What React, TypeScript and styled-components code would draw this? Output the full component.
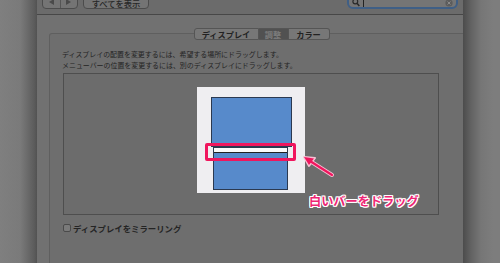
import React from "react";
import styled, { createGlobalStyle } from "styled-components";

const GlobalStyle = createGlobalStyle`
  html, body {
    margin: 0;
    padding: 0;
    background: #7b7b7b;
  }
  body {
    font-family: "Noto Sans CJK JP", "Noto Sans", sans-serif;
  }
`;

const Screen = styled.div`
  position: relative;
  width: 500px;
  height: 263px;
  display: flex;
  overflow: hidden;
  background: #7c7c7c;
`;

const LeftShadow = styled.div`
  width: 37px;
  flex-shrink: 0;
  background: linear-gradient(to right, #7f7f7f 0%, #7a7a7a 55%, #5c5c5c 92%, #525252 100%);
`;

const RightShadow = styled.div`
  flex: 1;
  background: linear-gradient(to right, #4c4c4c 0px, #626262 8px, #767676 18px, #7d7d7d 30px);
`;

const Window = styled.div`
  width: 426px;
  flex-shrink: 0;
  display: flex;
  flex-direction: column;
  background: #717171;
`;

const Toolbar = styled.div`
  flex-shrink: 0;
  display: flex;
  align-items: flex-end;
  padding: 0 5px 5px 5px;
  background: #6b6b6b;
  border-bottom: 1px solid #474747;
  box-sizing: content-box;
  height: 9px;
`;

const NavGroup = styled.div`
  display: flex;
  flex-shrink: 0;
  height: 18px;
  width: 34px;
  border: 1px solid #4c4c4c;
  border-radius: 4px;
  background: #747474;
  overflow: hidden;
`;

const NavHalf = styled.div<{ $divider?: boolean }>`
  flex: 1;
  display: flex;
  align-items: flex-end;
  justify-content: center;
  padding-bottom: 3px;
  border-right: ${(p) => (p.$divider ? "1px solid #555" : "none")};
`;

const Triangle = styled.div<{ $dir: "left" | "right" }>`
  width: 0;
  height: 0;
  border-top: 3px solid transparent;
  border-bottom: 3px solid transparent;
  ${(p) =>
    p.$dir === "left"
      ? "border-right: 5px solid #4a4a4a;"
      : "border-left: 5px solid #4a4a4a;"}
`;

const ShowAllButton = styled.div`
  margin-left: 5px;
  flex-shrink: 0;
  height: 18px;
  width: 64px;
  border: 1px solid #4c4c4c;
  border-radius: 4px;
  background: #747474;
  display: flex;
  align-items: flex-end;
  justify-content: center;
  font-size: 8.3px;
  line-height: 9px;
  color: #262626;
  font-weight: 500;
  white-space: nowrap;
  overflow: hidden;
`;

const Spacer = styled.div`
  flex: 1;
`;

const SearchField = styled.div`
  flex-shrink: 0;
  height: 16px;
  width: 101px;
  border: 2px solid #3f5f86;
  border-radius: 0 0 6px 6px;
  background: #757575;
  display: flex;
  align-items: flex-end;
  padding: 0 3px 0 3px;
  gap: 3px;
`;

const Caret = styled.div`
  width: 1px;
  height: 8px;
  background: #222;
`;

const Content = styled.div`
  flex: 1;
  padding: 18px 12px 0 12px;
`;

const GroupBox = styled.div`
  border: 1px solid #5f5f5f;
  border-bottom: none;
  border-radius: 3px 3px 0 0;
  background: #6e6e6e;
  height: 240px;
  width: 399px;
  padding: 0 10px 0 12px;
`;

const TabRow = styled.div`
  display: flex;
  justify-content: center;
  margin-top: -6px;
`;

const Tab = styled.div<{ $active?: boolean; $first?: boolean; $last?: boolean; $w: number }>`
  width: ${(p) => p.$w}px;
  height: 12px;
  box-sizing: border-box;
  display: flex;
  align-items: center;
  justify-content: center;
  font-size: 8.2px;
  font-weight: 700;
  color: ${(p) => (p.$active ? "#7c7c7c" : "#222")};
  background: ${(p) => (p.$active ? "#515151" : "#777777")};
  border: 1px solid #555;
  border-left: ${(p) => (p.$first ? "1px solid #555" : "none")};
  border-radius: ${(p) => (p.$first ? "3px 0 0 3px" : p.$last ? "0 3px 3px 0" : "0")};
  white-space: nowrap;
`;

const Hint = styled.div`
  margin-top: 9px;
  font-size: 6.95px;
  line-height: 11px;
  color: #242424;
  white-space: nowrap;
`;

const Arrangement = styled.div`
  margin: 2px 0 0 1px;
  width: 376px;
  height: 142px;
  box-sizing: border-box;
  border: 1px solid #4e4e4e;
  background: #6c6c6c;
  display: flex;
  justify-content: center;
  padding-top: 13px;
`;

const Canvas = styled.div`
  width: 108px;
  height: 106px;
  background: #efeef1;
  display: flex;
  flex-direction: column;
`;

const Display = styled.div<{ $ml: number; $w: number; $h: number; $mt: number }>`
  margin-left: ${(p) => p.$ml}px;
  margin-top: ${(p) => p.$mt}px;
  width: ${(p) => p.$w}px;
  height: ${(p) => p.$h}px;
  box-sizing: border-box;
  background: #578acb;
  border: 1px solid #2b3950;
  display: flex;
  flex-direction: column;
`;

const MenuBar = styled.div`
  height: 4px;
  background: #fbfbfb;
  border-bottom: 1px solid #222;
  flex-shrink: 0;
`;

const MirrorRow = styled.div`
  margin-top: 7px;
  margin-left: 1px;
  display: flex;
  align-items: center;
  gap: 2px;
  font-size: 8.4px;
  font-weight: 700;
  color: #242424;
`;

const Checkbox = styled.div`
  width: 8px;
  height: 8px;
  box-sizing: border-box;
  border: 1px solid #4a4a4a;
  border-radius: 2px;
  background: #7a7a7a;
`;

const Highlight = styled.div`
  position: absolute;
  left: 205px;
  top: 143px;
  width: 91px;
  height: 18px;
  box-sizing: border-box;
  border: 3px solid #f0165e;
  border-radius: 2px;
`;

const ArrowSvg = styled.svg`
  position: absolute;
  left: 298px;
  top: 150px;
`;

const Callout = styled.div`
  position: absolute;
  left: 309px;
  top: 192px;
  font-size: 12.2px;
  font-weight: 700;
  color: #ee2574;
  white-space: nowrap;
  text-shadow: 1px 0 0 #fff, -1px 0 0 #fff, 0 1px 0 #fff, 0 -1px 0 #fff, 1px 1px 0 #fff,
    -1px -1px 0 #fff, 1px -1px 0 #fff, -1px 1px 0 #fff;
`;

const App = () => {
  return (
    <>
      <GlobalStyle />
      <Screen>
        <LeftShadow />
        <Window>
          <Toolbar>
            <NavGroup>
              <NavHalf $divider>
                <Triangle $dir="left" />
              </NavHalf>
              <NavHalf>
                <Triangle $dir="right" />
              </NavHalf>
            </NavGroup>
            <ShowAllButton>すべてを表示</ShowAllButton>
            <Spacer />
            <SearchField>
              <svg width="8" height="9" viewBox="0 0 8 9">
                <circle cx="3.3" cy="3.5" r="2.4" fill="none" stroke="#2a2a2a" strokeWidth="1.2" />
                <line x1="5" y1="5.3" x2="7.3" y2="8" stroke="#2a2a2a" strokeWidth="1.5" />
              </svg>
              <Caret />
              <Spacer />
              <svg width="8" height="8" viewBox="0 0 8 8">
                <circle cx="4" cy="4" r="3.6" fill="#5c5c5c" />
                <path d="M2.5 2.5 L5.5 5.5 M5.5 2.5 L2.5 5.5" stroke="#8a8a8a" strokeWidth="1" />
              </svg>
            </SearchField>
          </Toolbar>
          <Content>
            <GroupBox>
              <TabRow>
                <Tab $first $w={65}>ディスプレイ</Tab>
                <Tab $active $w={30}>調整</Tab>
                <Tab $last $w={41}>カラー</Tab>
              </TabRow>
              <Hint>
                ディスプレイの配置を変更するには、希望する場所にドラッグします。
                <br />
                メニューバーの位置を変更するには、別のディスプレイにドラッグします。
              </Hint>
              <Arrangement>
                <Canvas>
                  <Display $ml={14} $mt={10} $w={81} $h={50} />
                  <Display $ml={16} $mt={0} $w={75} $h={43}>
                    <MenuBar />
                  </Display>
                </Canvas>
              </Arrangement>
              <MirrorRow>
                <Checkbox />
                ディスプレイをミラーリング
              </MirrorRow>
            </GroupBox>
          </Content>
        </Window>
        <RightShadow />
        <Highlight />
        <ArrowSvg width="40" height="32" viewBox="0 0 40 32">
          <line x1="34" y1="25" x2="12" y2="11" stroke="#f7c0d4" strokeWidth="4" strokeLinecap="round" />
          <polygon points="6,7 17,8 11,16" fill="#f7c0d4" stroke="#f7c0d4" strokeWidth="2" strokeLinejoin="round" />
          <line x1="34" y1="25" x2="12" y2="11" stroke="#f0165e" strokeWidth="2.2" strokeLinecap="round" />
          <polygon points="6,7 16,8.5 11,15" fill="#f0165e" />
        </ArrowSvg>
        <Callout>白いバーをドラッグ</Callout>
      </Screen>
    </>
  );
};

export default App;
